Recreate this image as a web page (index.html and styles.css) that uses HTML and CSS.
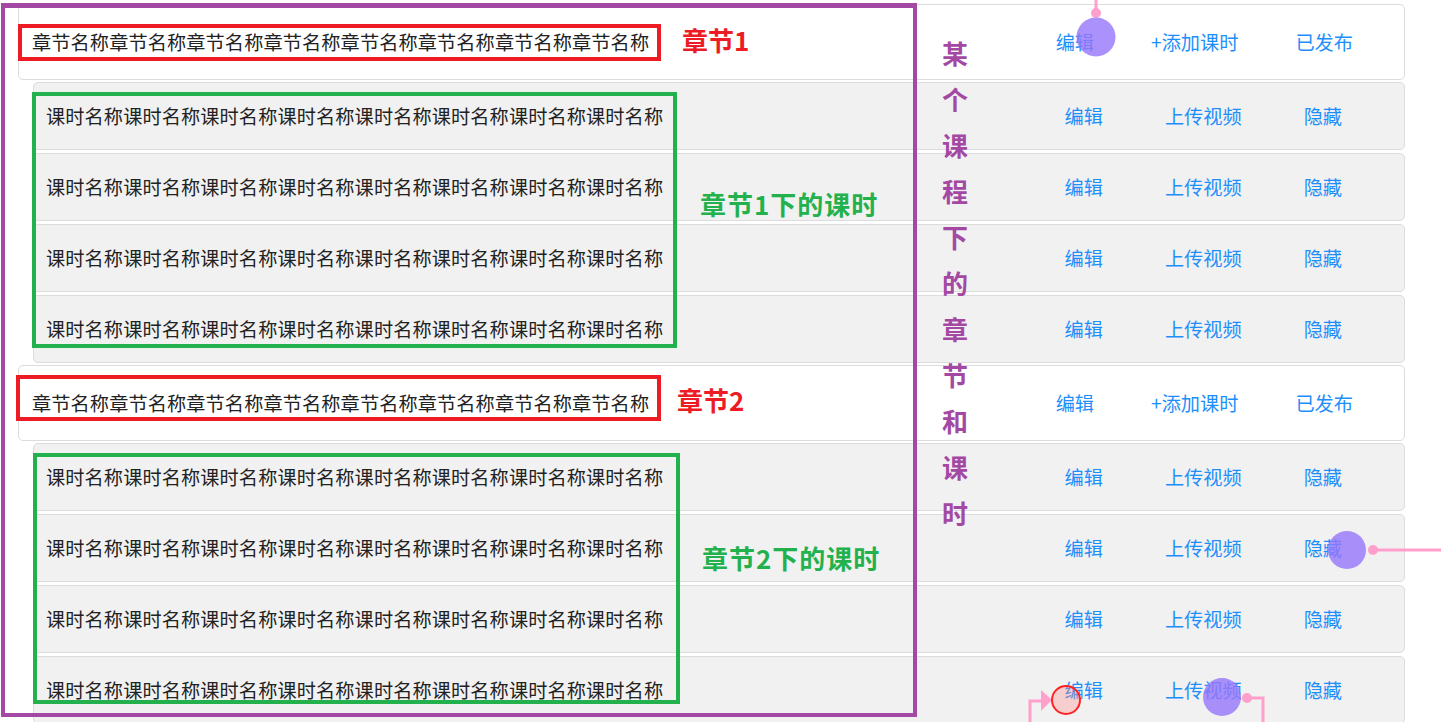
FILE: index.html
```html
<!DOCTYPE html>
<html lang="zh-CN">
<head>
<meta charset="utf-8">
<title>课程章节</title>
<link rel="stylesheet" href="styles.css">
</head>
<body>
<div class="course">
  <section class="group">
    <div class="chapter">
      <span class="name">章节名称章节名称章节名称章节名称章节名称章节名称章节名称章节名称</span>
      <div class="actions"><a href="#">编辑</a><a href="#">+添加课时</a><a href="#">已发布</a></div>
    </div>
    <div class="lessons">
      <div class="lesson"><span class="name">课时名称课时名称课时名称课时名称课时名称课时名称课时名称课时名称</span><div class="actions"><a href="#">编辑</a><a href="#">上传视频</a><a href="#">隐藏</a></div></div>
      <div class="lesson"><span class="name">课时名称课时名称课时名称课时名称课时名称课时名称课时名称课时名称</span><div class="actions"><a href="#">编辑</a><a href="#">上传视频</a><a href="#">隐藏</a></div></div>
      <div class="lesson"><span class="name">课时名称课时名称课时名称课时名称课时名称课时名称课时名称课时名称</span><div class="actions"><a href="#">编辑</a><a href="#">上传视频</a><a href="#">隐藏</a></div></div>
      <div class="lesson"><span class="name">课时名称课时名称课时名称课时名称课时名称课时名称课时名称课时名称</span><div class="actions"><a href="#">编辑</a><a href="#">上传视频</a><a href="#">隐藏</a></div></div>
    </div>
  </section>
  <section class="group">
    <div class="chapter">
      <span class="name">章节名称章节名称章节名称章节名称章节名称章节名称章节名称章节名称</span>
      <div class="actions"><a href="#">编辑</a><a href="#">+添加课时</a><a href="#">已发布</a></div>
    </div>
    <div class="lessons">
      <div class="lesson"><span class="name">课时名称课时名称课时名称课时名称课时名称课时名称课时名称课时名称</span><div class="actions"><a href="#">编辑</a><a href="#">上传视频</a><a href="#">隐藏</a></div></div>
      <div class="lesson"><span class="name">课时名称课时名称课时名称课时名称课时名称课时名称课时名称课时名称</span><div class="actions"><a href="#">编辑</a><a href="#">上传视频</a><a href="#">隐藏</a></div></div>
      <div class="lesson"><span class="name">课时名称课时名称课时名称课时名称课时名称课时名称课时名称课时名称</span><div class="actions"><a href="#">编辑</a><a href="#">上传视频</a><a href="#">隐藏</a></div></div>
      <div class="lesson"><span class="name">课时名称课时名称课时名称课时名称课时名称课时名称课时名称课时名称</span><div class="actions"><a href="#">编辑</a><a href="#">上传视频</a><a href="#">隐藏</a></div></div>
    </div>
  </section>
</div>

<div class="annotations">
  <div class="box box-purple"></div>
  <div class="box box-red box-red-1"></div>
  <div class="box box-red box-red-2"></div>
  <div class="box box-green box-green-1"></div>
  <div class="box box-green box-green-2"></div>
  <div class="label label-red label-ch1">章节1</div>
  <div class="label label-red label-ch2">章节2</div>
  <div class="label label-green label-ls1">章节1下的课时</div>
  <div class="label label-green label-ls2">章节2下的课时</div>
  <div class="label label-purple label-vertical">某个课程下的章节和课时</div>
  <svg class="cursors" width="1441" height="722" viewBox="0 0 1441 722">
    <g stroke="#ff9fcc" stroke-width="3" fill="none">
      <line x1="1096" y1="0" x2="1096" y2="13"/>
      <line x1="1373" y1="550" x2="1441" y2="550"/>
      <polyline points="1030,722 1030,701 1042,701"/>
      <polyline points="1247,698 1263,698 1263,722"/>
    </g>
    <g fill="#ff9fcc">
      <circle cx="1096" cy="13" r="5"/>
      <circle cx="1373" cy="550" r="5"/>
      <circle cx="1247" cy="698" r="5"/>
      <polygon points="1041,690 1052,700 1041,711"/>
    </g>
    <g fill="rgb(150,118,250)" fill-opacity="0.8">
      <circle cx="1096" cy="37" r="19.5"/>
      <circle cx="1347" cy="550" r="19"/>
      <circle cx="1222" cy="697" r="19"/>
    </g>
    <circle cx="1066" cy="700" r="14" fill="rgba(255,140,140,0.35)" stroke="#ff2222" stroke-width="2"/>
  </svg>
</div>
</body>
</html>
```

FILE: styles.css
```css
* {
  box-sizing: border-box;
}

html,
body {
  margin: 0;
  height: 722px;
  overflow: hidden;
  background: #ffffff;
}

body {
  font-family: "Noto Sans CJK SC", "Microsoft YaHei", sans-serif;
  font-size: 19.2px;
  line-height: 1.3;
  color: #222222;
}

.course {
  padding: 4px 36px 0 18px;
  display: flex;
  flex-direction: column;
  gap: 2px;
}

.group {
  display: flex;
  flex-direction: column;
  gap: 2px;
}

.chapter {
  height: 76px;
  border: 1px solid #dcdcdc;
  border-radius: 5px;
  background: #ffffff;
  display: flex;
  align-items: center;
  padding-left: 13px;
}

.lessons {
  margin-left: 15px;
  display: flex;
  flex-direction: column;
  gap: 3px;
}

.lesson {
  height: 68px;
  border: 1px solid #dcdcdc;
  border-radius: 5px;
  background: #f1f1f1;
  display: flex;
  align-items: center;
  padding-left: 12px;
}

.name {
  white-space: nowrap;
  letter-spacing: 0.1px;
}

.actions {
  margin-left: auto;
  display: flex;
}

.chapter .actions {
  gap: 57px;
  padding-right: 51px;
}

.lesson .actions {
  gap: 62px;
  padding-right: 62px;
}

.actions a {
  color: #1e8ffa;
  text-decoration: none;
  white-space: nowrap;
}

/* annotation overlay */
.annotations {
  position: absolute;
  left: 0;
  top: 0;
  width: 1441px;
  height: 722px;
  pointer-events: none;
}

.box {
  position: absolute;
  border-style: solid;
  border-width: 4px;
}

.box-purple {
  border-color: #a349a4;
  border-width: 5px 4px 4px 4px;
  left: 1px;
  top: 3px;
  width: 916px;
  height: 714px;
}

.box-red {
  border-color: #ed1c24;
}

.box-red-1 {
  left: 18px;
  top: 24px;
  width: 643px;
  height: 37px;
}

.box-red-2 {
  left: 16px;
  top: 375px;
  width: 645px;
  height: 46px;
}

.box-green {
  border-color: #22b14c;
}

.box-green-1 {
  left: 32px;
  top: 92px;
  width: 645px;
  height: 256px;
}

.box-green-2 {
  left: 33px;
  top: 453px;
  width: 647px;
  height: 251px;
}

.label {
  position: absolute;
  font-size: 26px;
  font-weight: 700;
  line-height: 1;
  white-space: nowrap;
}

.label-red {
  color: #ed1c24;
}

.label-green {
  color: #22b14c;
  letter-spacing: 1px;
}

.label-purple {
  color: #a349a4;
}

.label-ch1 {
  left: 682px;
  top: 27px;
}

.label-ch2 {
  left: 677px;
  top: 387px;
}

.label-ls1 {
  left: 700px;
  top: 191px;
}

.label-ls2 {
  left: 702px;
  top: 545px;
}

.label-vertical {
  left: 942px;
  top: 30px;
  width: 26px;
  line-height: 46px;
  white-space: normal;
  word-break: break-all;
}

.cursors {
  position: absolute;
  left: 0;
  top: 0;
}
```
